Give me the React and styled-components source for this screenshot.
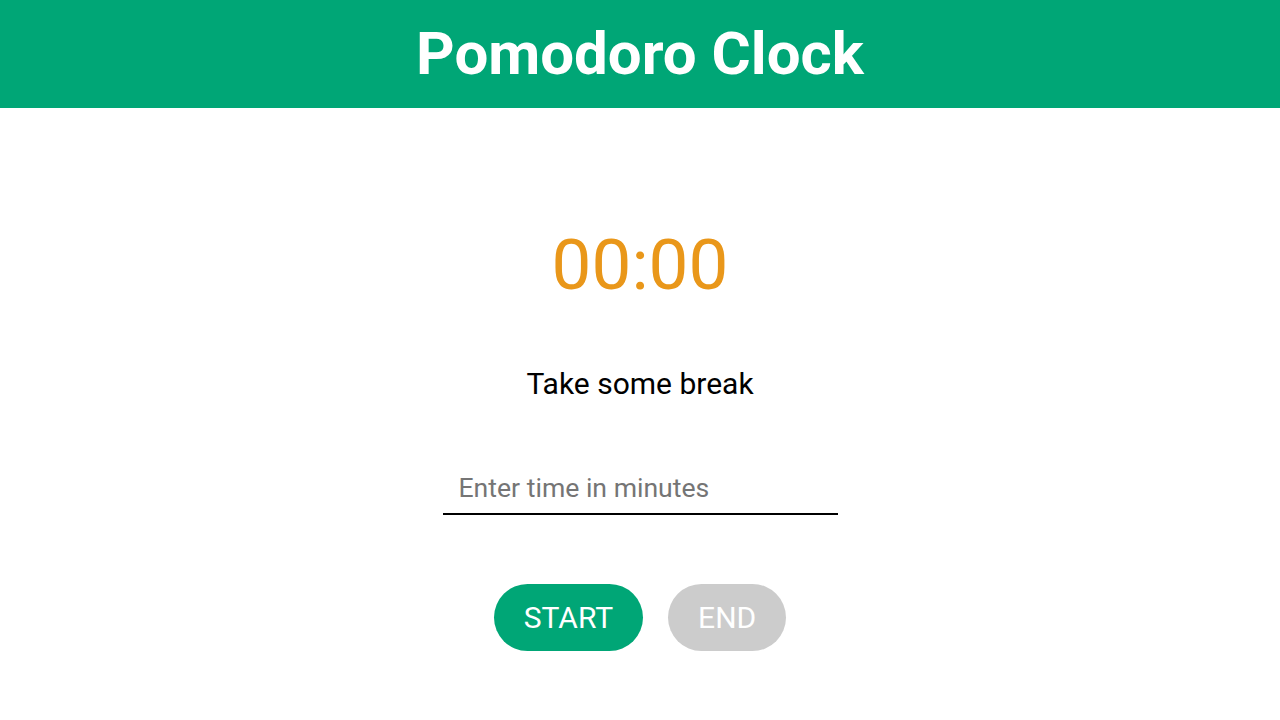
import React from "react";
import styled, { createGlobalStyle } from "styled-components";

const Global = createGlobalStyle`
  html, body { margin: 0; padding: 0; background: #fff; }
  body { font-family: Roboto, "Noto Sans", sans-serif; }
  * { box-sizing: border-box; }
`;

const Header = styled.header`
  height: 108px;
  background: #00a676;
  display: flex;
  align-items: center;
  justify-content: center;
`;

const Title = styled.h1`
  margin: 0;
  color: #fff;
  font-size: 60px;
  font-weight: 700;
  line-height: 1;
`;

const Main = styled.main`
  display: flex;
  flex-direction: column;
  align-items: center;
  padding-top: 114px;
`;

const Timer = styled.div`
  color: #e9971a;
  font-size: 71px;
  font-weight: 400;
  line-height: 1.2;
`;

const Status = styled.div`
  margin-top: 57px;
  font-size: 30px;
  color: #000;
  line-height: 40px;
`;

const Input = styled.input`
  margin-top: 58px;
  width: 395px;
  height: 53px;
  border: none;
  border-bottom: 2px solid #000;
  outline: none;
  padding: 0 16px;
  font-family: inherit;
  font-size: 26.6px;
  color: #000;
  background: transparent;
  &::placeholder { color: #757575; }
`;

const Buttons = styled.div`
  display: flex;
  gap: 25px;
  margin-top: 69px;
`;

const Button = styled.button`
  height: 67px;
  padding: 0 30px;
  border: none;
  border-radius: 34px;
  background: ${(p) => (p.$disabled ? "#cccccc" : "#00a676")};
  color: #fff;
  font-family: inherit;
  font-size: 30px;
  cursor: pointer;
`;

export default function App() {
  return (
    <>
      <Global />
      <Header>
        <Title>Pomodoro Clock</Title>
      </Header>
      <Main>
        <Timer>00:00</Timer>
        <Status>Take some break</Status>
        <Input placeholder="Enter time in minutes" />
        <Buttons>
          <Button>START</Button>
          <Button $disabled>END</Button>
        </Buttons>
      </Main>
    </>
  );
}
